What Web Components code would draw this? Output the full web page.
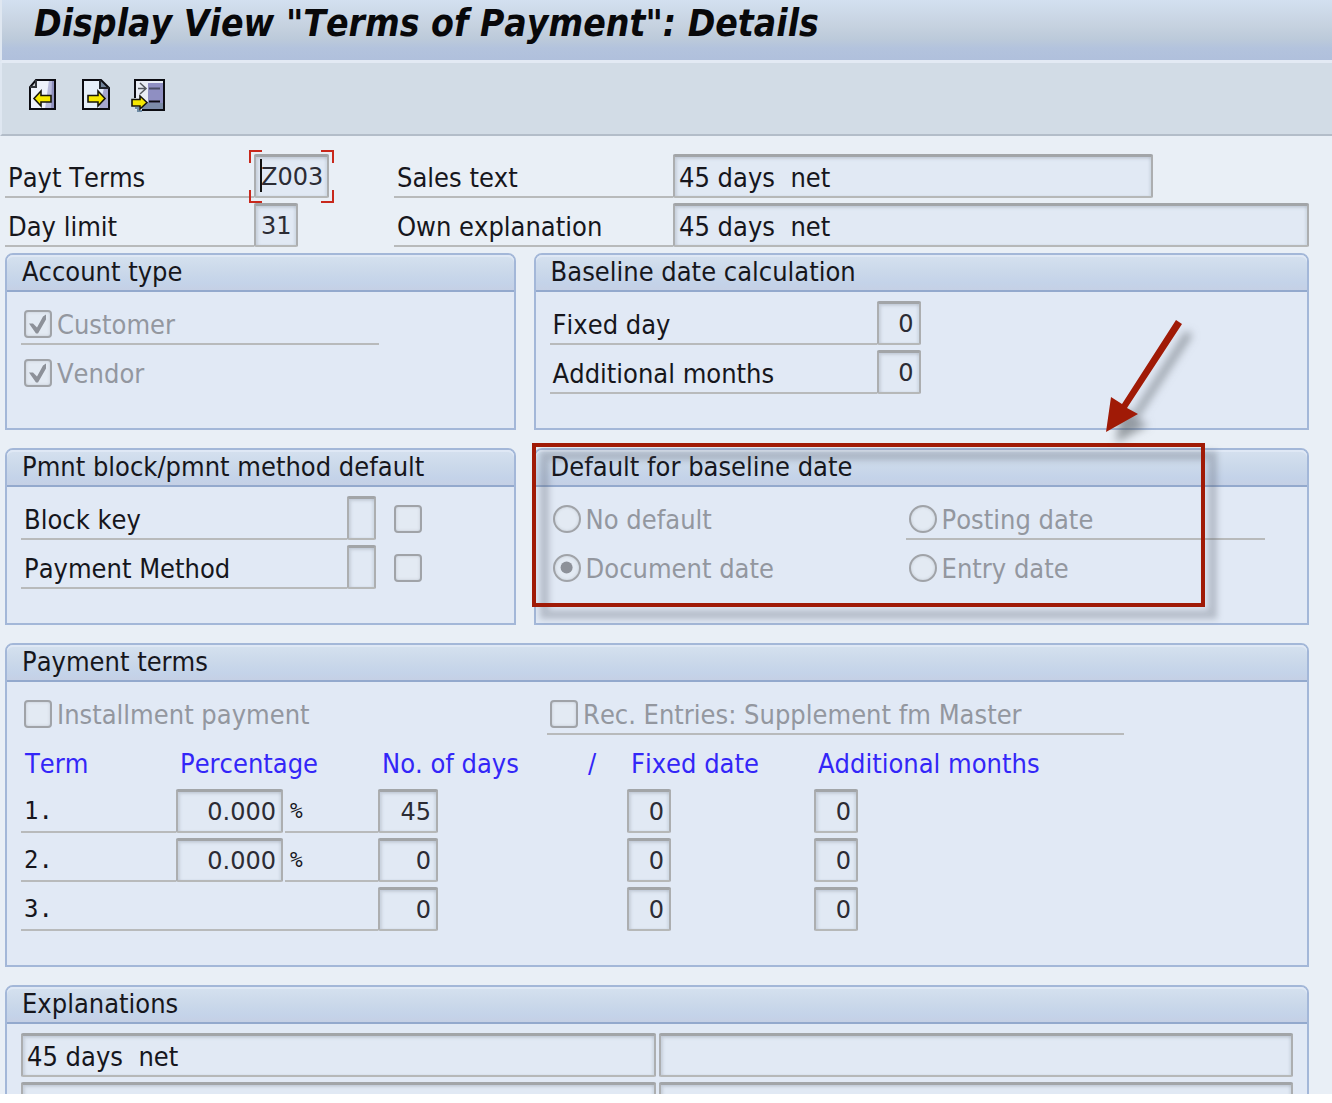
<!DOCTYPE html>
<html lang="en">
<head>
<meta charset="utf-8">
<title>Display View "Terms of Payment": Details</title>
<style>
    body {
        margin: 0;
        background: #fff;
        color: #16161c;
        font: 27px/32px "DejaVu Sans Condensed", "DejaVu Sans", sans-serif;
        font-stretch: condensed;
        font-kerning: none;
    }

    .header-fields {
        display: grid;
        grid-template-columns: 389px 1fr;
        gap: 5px 0;
    }

    .groups {
        display: grid;
        grid-template-columns: 511fr 776fr;
        gap: 18px;
        margin-top: 6px;
    }

    .wide {
        grid-column: 1 / -1;
    }

    .stack {
        display: grid;
        gap: 5px;
    }

    .radios {
        display: grid;
        grid-template-columns: 356px 359px;
        gap: 5px 0;
    }

    .flags {
        display: grid;
        grid-template-columns: 526px 577px;
    }

    .texts {
        display: grid;
        grid-template-columns: 1fr 1fr;
        gap: 5px 3px;
    }

    .marked {
        position: relative;
    }
</style>
</head>
<body>

<view-window>
    <title-bar slot="bar">Display View "Terms of Payment": Details</title-bar>
    <tool-bar slot="bar"></tool-bar>

    <div class="header-fields">
        <field-row label="Payt Terms" label-width="249" value="Z003" width="75" code active></field-row>
        <field-row label="Sales text" label-width="279" value="45 days  net" width="480"></field-row>
        <field-row label="Day limit" label-width="249" value="31" width="44" code></field-row>
        <field-row label="Own explanation" label-width="279" value="45 days  net"></field-row>
    </div>

    <div class="groups">
        <group-box heading="Account type">
            <div class="stack">
                <choice-item label="Customer" checked ruled width="358"></choice-item>
                <choice-item label="Vendor" checked></choice-item>
            </div>
        </group-box>

        <group-box heading="Baseline date calculation">
            <div class="stack">
                <field-row label="Fixed day" label-width="327" value="0" width="44" code right></field-row>
                <field-row label="Additional months" label-width="327" value="0" width="44" code right></field-row>
            </div>
        </group-box>

        <group-box heading="Pmnt block/pmnt method default">
            <div class="stack">
                <field-row label="Block key" label-width="326" width="29"><choice-item name="Block key in line item"></choice-item></field-row>
                <field-row label="Payment Method" label-width="326" width="29"><choice-item name="Payment method in line item"></choice-item></field-row>
            </div>
        </group-box>

        <div class="marked">
            <group-box heading="Default for baseline date">
                <div class="radios">
                    <choice-item type="radio" label="No default"></choice-item>
                    <choice-item type="radio" label="Posting date" ruled></choice-item>
                    <choice-item type="radio" label="Document date" checked></choice-item>
                    <choice-item type="radio" label="Entry date"></choice-item>
                </div>
            </group-box>
            <callout-mark></callout-mark>
        </div>

        <group-box class="wide" heading="Payment terms">
            <div class="flags">
                <choice-item label="Installment payment"></choice-item>
                <choice-item label="Rec. Entries: Supplement fm Master" ruled></choice-item>
            </div>
            <terms-table></terms-table>
        </group-box>

        <group-box class="wide" heading="Explanations">
            <div class="texts">
                <field-row name="Explanation 1, left" value="45 days  net"></field-row>
                <field-row name="Explanation 1, right"></field-row>
                <field-row name="Explanation 2, left"></field-row>
                <field-row name="Explanation 2, right"></field-row>
            </div>
        </group-box>
    </div>
</view-window>

<script>
// Sunken read-only box, shared by every element that shows a field
const FIELD_CSS = `
    input.field {
        box-sizing: border-box;
        height: 44px;
        margin: 0;
        padding: 2px 4px 0;
        border: 2px solid #acaeb0;
        border-top: 3px solid #a2a5a8;
        border-bottom-color: #b6b8b8;
        border-radius: 2px;
        background: #e1e9f4;
        box-shadow: inset 2px 2px 3px rgba(110, 120, 130, .22), inset -2px 0 2px rgba(110, 120, 130, .12);
        color: inherit;
        font: inherit;
        outline: none;
    }
    input.code {
        padding: 0 5px;
        color: #2c2c34;
        font: 24px/28px "DejaVu Sans", sans-serif;
        font-stretch: normal;
    }
    input.right { text-align: right; }
`;

const RULE = '2px solid #b8babb';

class ViewWindow extends HTMLElement {
    constructor() {
        super();
        this.attachShadow({ mode: 'open' });
        this.shadowRoot.innerHTML = `
            <style>
                :host {
                    display: block;
                    height: calc(100vh - 9px);
                    overflow: hidden;
                    background: #e9eff6;
                }
                main { padding: 18px 23px 18px 5px; }
            </style>
            <slot name="bar"></slot>
            <main><slot></slot></main>
        `;
    }
}

class TitleBar extends HTMLElement {
    constructor() {
        super();
        this.attachShadow({ mode: 'open' });
        this.shadowRoot.innerHTML = `
            <style>
                :host {
                    display: block;
                    border-left: 2px solid #dfe7f1;
                    border-bottom: 3px solid #e3eaf4;
                    background: linear-gradient(#d3e0f0, #c5d1df 45%, #bccada 65%, #b3c3dd 80%, #b0c0dc);
                }
                h1 {
                    margin: 0;
                    padding: 0 32px 12px;
                    color: #08080a;
                    font: italic bold 37px/48px "DejaVu Sans Condensed", "DejaVu Sans", sans-serif;
                    font-stretch: condensed;
                    font-kerning: none;
                }
            </style>
            <h1><slot></slot></h1>
        `;
    }
}

class ToolBar extends HTMLElement {
    constructor() {
        super();
        this.attachShadow({ mode: 'open' });
        this.shadowRoot.innerHTML = `
            <style>
                :host {
                    display: flex;
                    gap: 17px;
                    padding: 14px 22px 21px;
                    border-left: 2px solid #dfe7f1;
                    border-bottom: 2px solid #b3bdc9;
                    background: #d2dce6;
                }
                button {
                    width: 36px;
                    height: 36px;
                    padding: 0;
                    border: 0;
                    background: none;
                }
                svg { display: block; }
            </style>
            <button type="button" aria-label="Previous entry">
                <svg width="36" height="36" viewBox="0 0 36 36">
                    <path d="M12 3H31V32H6V11Z" fill="#eef2fb"/>
                    <path d="M25 3H31V32H21Z" fill="#b9bbdc"/>
                    <path d="M28 3H31V32H27Z" fill="#8f90bd"/>
                    <path d="M6 10L12 3V10Z" fill="#c9cdd2"/>
                    <path d="M12 3H31V32H6V10Z" fill="none" stroke="#0c0c12" stroke-width="2"/>
                    <path d="M12 3V10H6" fill="none" stroke="#33363c" stroke-width="2"/>
                    <path d="M10 21.500L17 14V18.500H27V25H17V29Z" fill="#f6e800" stroke="#17160a" stroke-width="1.600"/>
                </svg>
            </button>
            <button type="button" aria-label="Next entry">
                <svg width="36" height="36" viewBox="0 0 36 36">
                    <path d="M6 3H24L32 11V32H6Z" fill="#e6effa"/>
                    <path d="M27 11H32V32H22Z" fill="#a5a6ce"/>
                    <path d="M23 3L32 11H23Z" fill="#71839a"/>
                    <path d="M6 3H24L32 11V32H6Z" fill="none" stroke="#0c0c12" stroke-width="2"/>
                    <path d="M23 3V11H32" fill="none" stroke="#22252d" stroke-width="2"/>
                    <path d="M28 21.500L21 14V18.500H11V25H21V29Z" fill="#f6e800" stroke="#17160a" stroke-width="1.600"/>
                </svg>
            </button>
            <button type="button" aria-label="Other entry">
                <svg width="36" height="36" viewBox="0 0 36 36">
                    <path d="M5 3H34V33H5Z" fill="#e9edf5"/>
                    <path d="M18 6H33V26H18Z" fill="#8f8fc2"/>
                    <path d="M12 26H33V32H12Z" fill="#7c8ca8"/>
                    <path d="M5 21V3H34V33H12" fill="none" stroke="#0c0c12" stroke-width="2"/>
                    <path d="M5 31H8V34H12" fill="none" stroke="#6f8ca5" stroke-width="2"/>
                    <path d="M19 11.500H30" stroke="#4b4d66" stroke-width="2"/>
                    <path d="M19 24.500H30" stroke="#0c0c12" stroke-width="2"/>
                    <path d="M8 11.500H16M10 6L16 11.500L10 17" fill="none" stroke="#55595e" stroke-width="1.500"/>
                    <path d="M17 25.500L10 19V22.500H2V29H10V32Z" fill="#f6e800" stroke="#17160a" stroke-width="1.600"/>
                </svg>
            </button>
        `;
    }
}

class GroupBox extends HTMLElement {
    constructor() {
        super();
        this.attachShadow({ mode: 'open' });
        this.shadowRoot.innerHTML = `
            <style>
                :host { display: block; }
                section {
                    border: 2px solid #a3b7d8;
                    border-radius: 8px 8px 0 0;
                    background: #e1e9f5;
                }
                h2 {
                    margin: 0;
                    padding: 0 15px 2px;
                    border-bottom: 2px solid #93a9cd;
                    border-radius: 6px 6px 0 0;
                    background: linear-gradient(#d5e1ef, #cad8ea 50%, #c4d3e9 80%, #c5d0e5);
                    box-shadow: inset 0 2px 0 #dfe8f5;
                    font-size: 27px;
                    font-weight: normal;
                    line-height: 33px;
                }
                .body { padding: 9px 14px 34px; }
            </style>
            <section>
                <h2>${this.getAttribute('heading')}</h2>
                <div class="body"><slot></slot></div>
            </section>
        `;
    }
}

class FieldRow extends HTMLElement {
    constructor() {
        super();
        this.attachShadow({ mode: 'open' });
        this.render();
    }

    render() {
        const label = this.getAttribute('label');
        const width = this.getAttribute('width');
        const value = this.getAttribute('value') || '';
        const classes = ['field'];
        if (this.hasAttribute('code')) classes.push('code');
        if (this.hasAttribute('right')) classes.push('right');
        const name = label ? '' : `aria-label="${this.getAttribute('name')}"`;

        this.shadowRoot.innerHTML = `
            <style>
                ${FIELD_CSS}
                :host { display: flex; min-width: 0; }
                label {
                    box-sizing: border-box;
                    flex: none;
                    width: ${this.getAttribute('label-width') || 0}px;
                    height: 44px;
                    padding: 8px 3px 0;
                    border-bottom: ${RULE};
                    white-space: nowrap;
                }
                .box {
                    position: relative;
                    display: flex;
                    ${width ? `flex: 0 1 ${width}px;` : 'flex: 1;'}
                    min-width: 0;
                }
                .box input { width: 100%; min-width: 0; }
                ::slotted(*) { margin-left: 15px; }

                /* red corners and text cursor of the active field */
                .corners {
                    position: absolute;
                    inset: -4px -5px -5px;
                    pointer-events: none;
                    --ink: linear-gradient(#c8281c, #c8281c);
                    background:
                        var(--ink) 0 0 / 13px 2px, var(--ink) 0 0 / 2px 13px,
                        var(--ink) 100% 0 / 13px 2px, var(--ink) 100% 0 / 2px 13px,
                        var(--ink) 0 100% / 13px 2px, var(--ink) 0 100% / 2px 13px,
                        var(--ink) 100% 100% / 13px 2px, var(--ink) 100% 100% / 2px 13px;
                    background-repeat: no-repeat;
                }
                .caret {
                    position: absolute;
                    left: 6px;
                    top: 5px;
                    width: 2px;
                    height: 33px;
                    background: #111;
                }
            </style>
            ${label ? `<label for="field">${label}</label>` : ''}
            <div class="box">
                <input id="field" class="${classes.join(' ')}" value="${value}" ${name} readonly>
                ${this.hasAttribute('active') ? '<span class="corners"></span><span class="caret"></span>' : ''}
            </div>
            <slot></slot>
        `;
    }
}

class ChoiceItem extends HTMLElement {
    constructor() {
        super();
        this.attachShadow({ mode: 'open' });
        this.render();
    }

    render() {
        const type = this.getAttribute('type') || 'checkbox';
        const label = this.getAttribute('label');
        const width = this.getAttribute('width');
        const checked = this.hasAttribute('checked') ? 'checked' : '';
        const name = label ? '' : `aria-label="${this.getAttribute('name')}"`;

        this.shadowRoot.innerHTML = `
            <style>
                :host {
                    box-sizing: border-box;
                    display: flex;
                    align-items: center;
                    gap: 5px;
                    height: 44px;
                    padding: 3px 3px 0;
                    ${width ? `width: ${width}px;` : ''}
                    border-bottom: 2px solid transparent;
                    color: #93979f;
                    white-space: nowrap;
                }
                :host([ruled]) { border-bottom: ${RULE}; }
                input {
                    appearance: none;
                    box-sizing: border-box;
                    flex: none;
                    width: 28px;
                    height: 28px;
                    margin: 0;
                    border: 2px solid #a0a3a8;
                    border-radius: 4px;
                    background: #e3eaf3;
                    box-shadow: inset 0 0 3px rgba(120, 130, 140, .3);
                }
                input[type="radio"] { border-radius: 50%; }
                input:checked::before {
                    content: "";
                    display: block;
                    width: 24px;
                    height: 24px;
                    background: #8d9199;
                    clip-path: polygon(3px 12px, 7px 12px, 11px 16px, 17px 5px, 20px 3px, 20px 8px, 12px 22px, 10px 22px);
                }
                input[type="radio"]:checked::before {
                    background: #8d9199;
                    clip-path: circle(6px);
                }
                label { padding-top: 2px; }
            </style>
            <input id="choice" type="${type}" ${checked} ${name} disabled>
            ${label ? `<label for="choice">${label}</label>` : ''}
        `;
    }
}

class TermsTable extends HTMLElement {
    constructor() {
        super();
        this.attachShadow({ mode: 'open' });
        this.terms = [
            { no: '1.', percent: '0.000', days: '45', date: '0', months: '0' },
            { no: '2.', percent: '0.000', days: '0', date: '0', months: '0' },
            { no: '3.', percent: null, days: '0', date: '0', months: '0' }
        ];
        this.render();
    }

    field(value, size, name) {
        return `<input class="field code right ${size}" value="${value}" aria-label="${name}" readonly>`;
    }

    row(term) {
        const lead = term.percent === null
            ? `<td colspan="3"><div class="ruled">${term.no}</div></td>`
            : `<td><div class="ruled">${term.no}</div></td>
               <td>${this.field(term.percent, 'large', 'Percentage ' + term.no)}</td>
               <td><div class="ruled unit">%</div></td>`;
        return `
            <tr>
                ${lead}
                <td>${this.field(term.days, 'medium', 'No. of days ' + term.no)}</td>
                <td></td>
                <td>${this.field(term.date, 'small', 'Fixed date ' + term.no)}</td>
                <td>${this.field(term.months, 'small', 'Additional months ' + term.no)}</td>
            </tr>
        `;
    }

    render() {
        this.shadowRoot.innerHTML = `
            <style>
                ${FIELD_CSS}
                :host { display: block; }
                table {
                    width: 100%;
                    table-layout: fixed;
                    border-collapse: collapse;
                }
                th, td {
                    padding: 5px 0 0;
                    text-align: left;
                    vertical-align: top;
                    white-space: nowrap;
                }
                th {
                    height: 32px;
                    padding: 13px 4px 4px;
                    color: #3326f8;
                    font-weight: normal;
                }
                th.slash { padding-left: 0; }
                td input { display: block; }
                .large { width: 107px; }
                .medium { width: 60px; }
                .small { width: 44px; }
                .ruled {
                    box-sizing: border-box;
                    height: 44px;
                    padding: 6px 3px 0;
                    border-bottom: ${RULE};
                    font: 24px/32px "DejaVu Sans Mono", monospace;
                }
                .unit {
                    padding-left: 5px;
                    font-size: 21px;
                }
            </style>
            <table>
                <colgroup>
                    <col style="width: 155px"><col style="width: 109px"><col style="width: 93px">
                    <col style="width: 210px"><col style="width: 39px"><col style="width: 187px"><col>
                </colgroup>
                <thead>
                    <tr>
                        <th>Term</th>
                        <th colspan="2">Percentage</th>
                        <th>No. of days</th>
                        <th class="slash">/</th>
                        <th>Fixed date</th>
                        <th>Additional months</th>
                    </tr>
                </thead>
                <tbody>${this.terms.map(term => this.row(term)).join('')}</tbody>
            </table>
        `;
    }
}

// Red frame and arrow laid over the box they point at
class CalloutMark extends HTMLElement {
    constructor() {
        super();
        this.attachShadow({ mode: 'open' });
        this.shadowRoot.innerHTML = `
            <style>
                :host {
                    position: absolute;
                    inset: 0;
                    pointer-events: none;
                }
                .frame, .shade { position: absolute; }
                .frame {
                    inset: -5px 104px 18px -2px;
                    border: 4px solid #a01a06;
                }
                .shade {
                    inset: 3px 92px 6px 6px;
                    border: 9px solid rgba(80, 85, 100, .3);
                    filter: blur(3px);
                }
                svg {
                    position: absolute;
                    top: -133px;
                    right: 99px;
                    overflow: visible;
                    filter: drop-shadow(10px 11px 4px rgba(70, 75, 80, .5));
                }
            </style>
            <div class="shade"></div>
            <div class="frame"></div>
            <svg width="110" height="130" viewBox="0 0 110 130">
                <path d="M6 117L11 82L22 89L76 5L82 9L27 93L38 99Z" fill="#a01a06"/>
            </svg>
        `;
    }
}

customElements.define('view-window', ViewWindow);
customElements.define('title-bar', TitleBar);
customElements.define('tool-bar', ToolBar);
customElements.define('group-box', GroupBox);
customElements.define('field-row', FieldRow);
customElements.define('choice-item', ChoiceItem);
customElements.define('terms-table', TermsTable);
customElements.define('callout-mark', CalloutMark);
</script>
</body>
</html>
